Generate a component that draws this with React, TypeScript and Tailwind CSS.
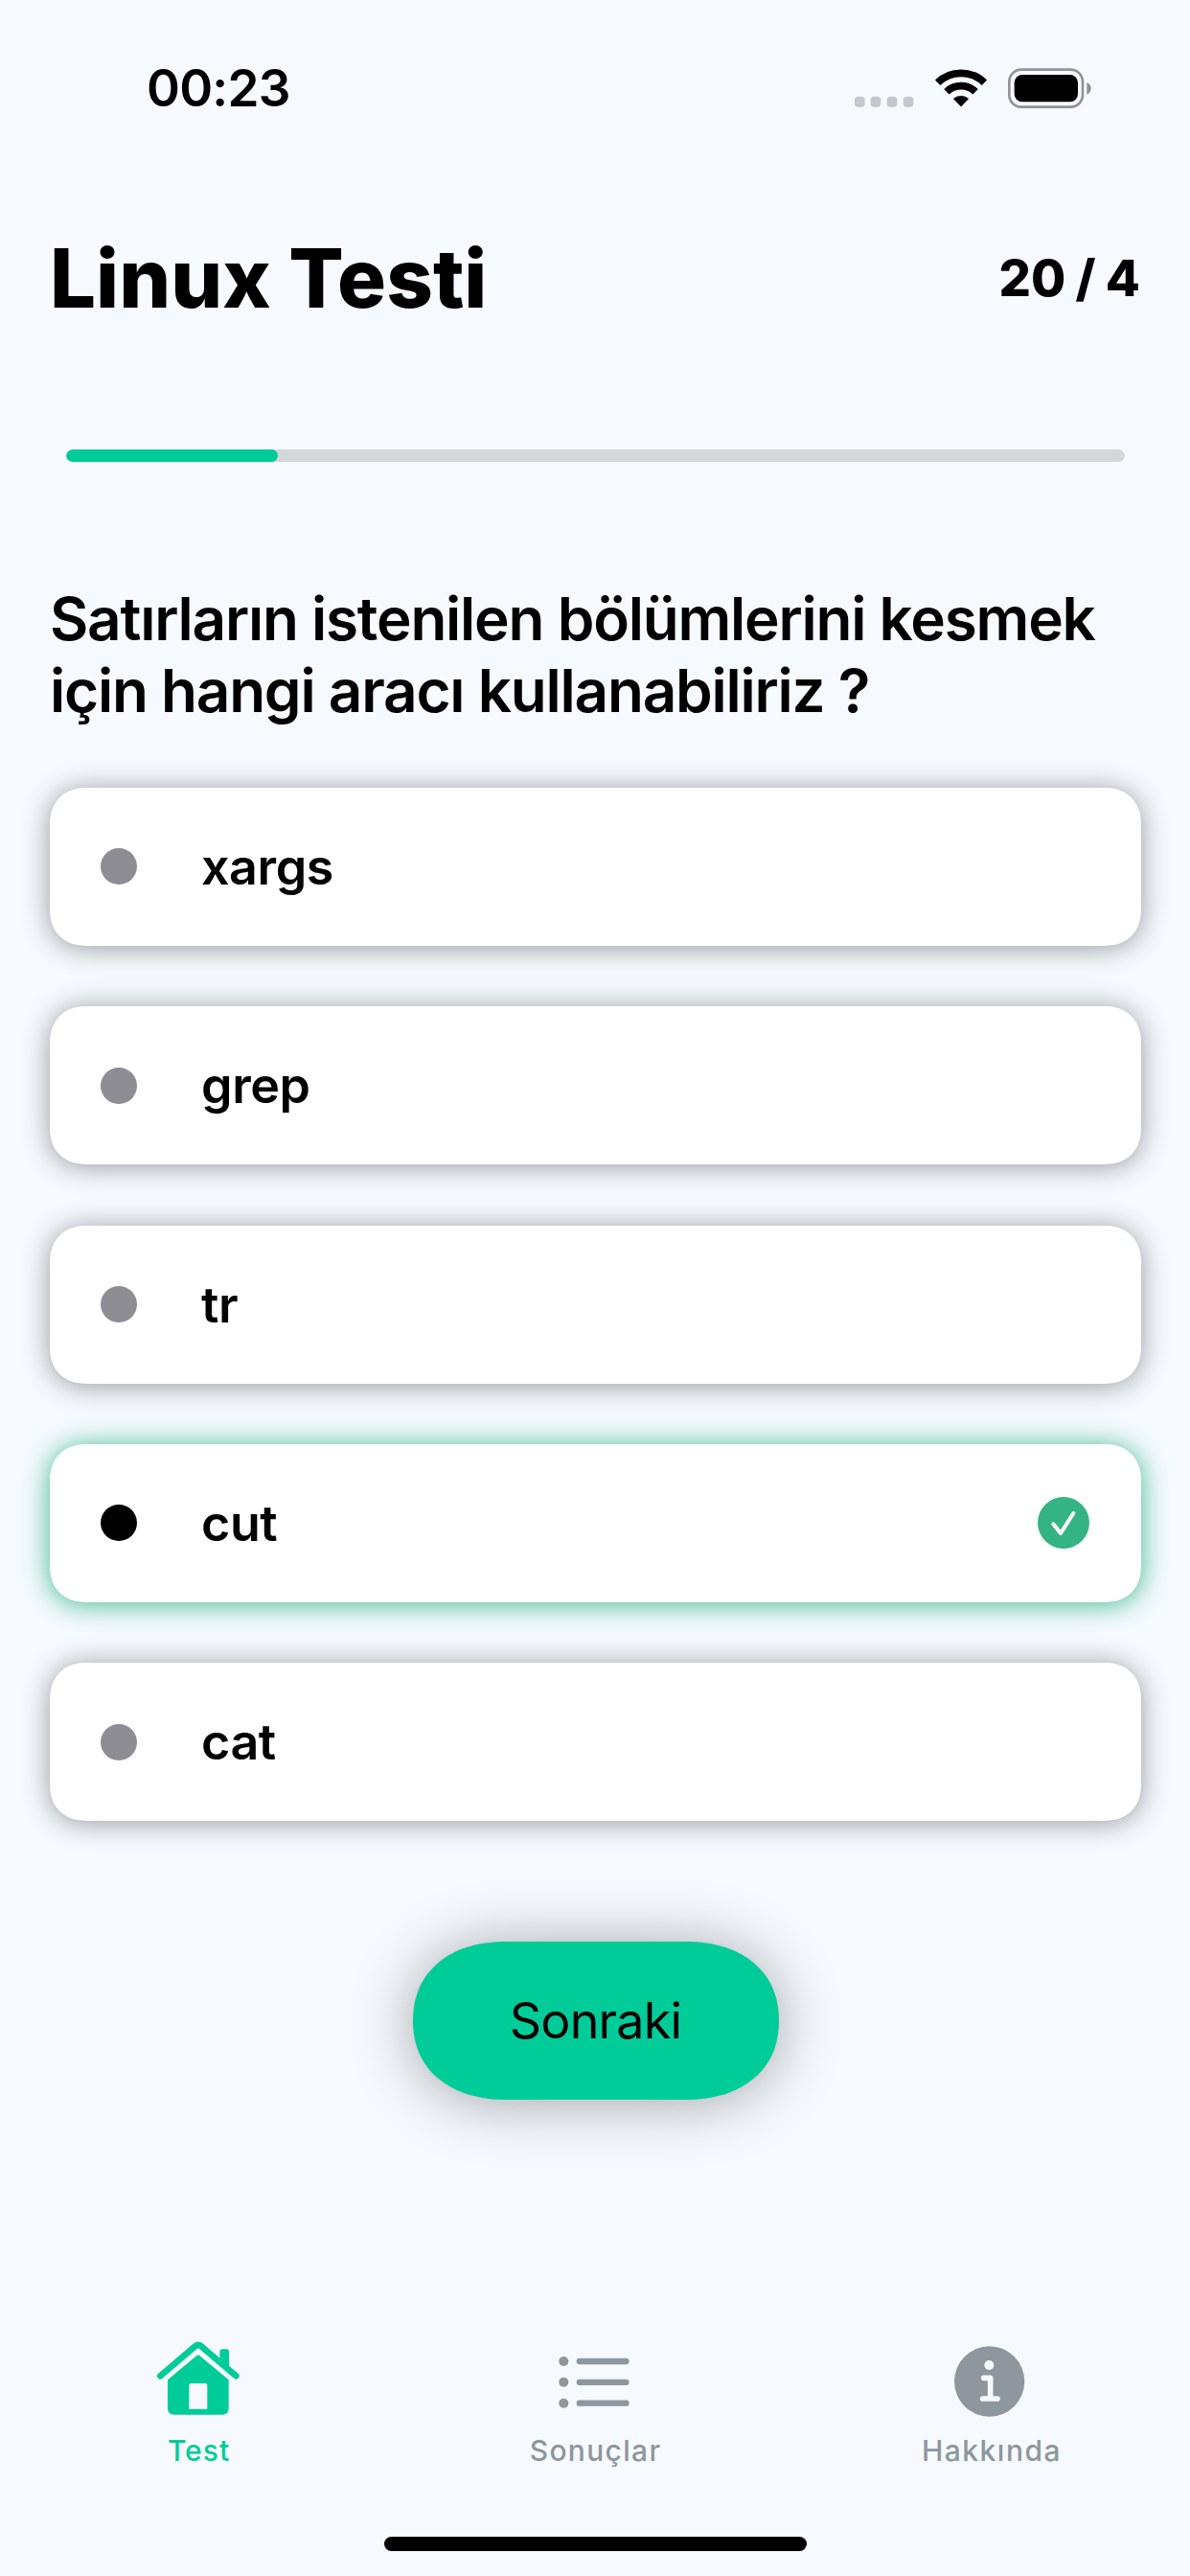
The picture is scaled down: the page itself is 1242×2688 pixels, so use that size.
import React from "react";

type Option = { label: string; selected?: boolean };

const options: Option[] = [
  { label: "xargs" },
  { label: "grep" },
  { label: "tr" },
  { label: "cut", selected: true },
  { label: "cat" },
];

const current = 4;
const total = 20;

function StatusBar() {
  return (
    <div className="flex h-[184px] items-center justify-between pl-[153px] pr-[103px]">
      <span className="pt-px text-[53px] leading-none font-[560] tracking-[-0.8px]">00:23</span>
      <div className="flex items-center gap-[22px]">
        <svg width="62" height="42" viewBox="92 93 186 126" fill="#c4c8cd">
          <rect x="92" y="182" width="32" height="33" rx="11" />
          <rect x="142" y="182" width="32" height="33" rx="11" />
          <rect x="193" y="182" width="32" height="33" rx="11" />
          <rect x="244" y="182" width="32" height="33" rx="11" />
        </svg>
        <svg width="54" height="42" viewBox="344 93 162 126" fill="none" stroke="#000" strokeWidth="23">
          <path d="M352 138.5A105 105 0 0 1 498 138.5" />
          <path d="M379.8 167.3A65 65 0 0 1 470.2 167.3" />
          <path d="M402 189A36 36 0 0 1 448 189L425 213Z" fill="#000" stroke="#000" strokeWidth="2" strokeLinejoin="round" />
        </svg>
        <svg width="87" height="42" viewBox="574 92 261 126" fill="none">
          <rect x="578" y="97" width="230" height="117" rx="38" stroke="#929398" strokeWidth="8" />
          <rect x="594" y="113" width="199" height="85" rx="25" fill="#000" />
          <path d="M821 137C830 141 834 148 834 156C834 164 830 171 821 175Z" fill="#8e8f93" />
        </svg>
      </div>
    </div>
  );
}

function CheckBadge() {
  return (
    <svg className="ml-auto" width="54" height="54" viewBox="246 307 162 162" fill="none">
      <circle cx="327" cy="388" r="81" fill="#34b485" />
      <path d="M295 392L318 421L358 358" stroke="#fff" strokeWidth="12" strokeLinecap="round" strokeLinejoin="round" />
    </svg>
  );
}

function OptionCard({ label, selected }: Option) {
  return (
    <button
      className={
        selected
          ? "flex h-[165px] items-center rounded-[35px] bg-white pl-[53px] pr-[54px] shadow-[0_2px_29px_rgba(52,180,133,0.95)] supports-[corner-shape:squircle]:rounded-[39px] supports-[corner-shape:squircle]:[corner-shape:superellipse(1.2)]"
          : "flex h-[165px] items-center rounded-[35px] bg-white pl-[53px] pr-[54px] shadow-[0_2px_29px_rgba(0,0,0,0.4)] supports-[corner-shape:squircle]:rounded-[39px] supports-[corner-shape:squircle]:[corner-shape:superellipse(1.2)]"
      }
    >
      <span className={selected ? "size-[38px] rounded-full bg-black" : "size-[38px] rounded-full bg-[#8e8d93]"} />
      <span className="ml-[67px] pt-px text-[52px] leading-[64px] font-semibold tracking-[-0.4px]">{label}</span>
      {selected && <CheckBadge />}
    </button>
  );
}

function HomeIcon() {
  return (
    <svg width="90" height="90" viewBox="126 60 270 270" fill="#00cc99">
      <path
        fillRule="evenodd"
        d="M256 114Q260.500 110 265 114L356 190V278Q356 299 335 299H186Q165 299 165 278V190ZM238 201Q232 201 232 207V281H289V207Q289 201 283 201Z"
      />
      <path d="M328 124V102Q328 94 336 94H349Q357 94 357 102V148Z" />
      <path d="M142 178L252 84Q260.500 78 269 84L379 178" fill="none" stroke="#00cc99" strokeWidth="20" strokeLinecap="round" strokeLinejoin="round" />
    </svg>
  );
}

function ListIcon() {
  return (
    <svg width="90" height="90" viewBox="168 60 270 270" fill="#8e969e">
      {[132, 197.5, 263].map((y) => (
        <g key={y}>
          <circle cx="205" cy={y} r="15" />
          <rect x="245" y={y - 9.5} width="165" height="19" rx="9.500" />
        </g>
      ))}
    </svg>
  );
}

function InfoIcon() {
  return (
    <svg width="90" height="90" viewBox="180 60 270 270" fill="none">
      <circle cx="308" cy="195" r="110" fill="#8e969e" />
      <circle cx="307" cy="144" r="15" fill="#f6faff" />
      <path d="M290 184H311V249M287 249H333" stroke="#f6faff" strokeWidth="17" strokeLinecap="round" strokeLinejoin="round" />
    </svg>
  );
}

function TabBar() {
  return (
    <nav className="grid grid-cols-3 text-[30px] leading-9 font-medium text-[#8e969e]">
      <div className="flex flex-col items-center gap-[9px] text-[#00cc99]">
        <HomeIcon />
        <span className="pl-px tracking-[0.99px]">Test</span>
      </div>
      <div className="flex flex-col items-center gap-[9px]">
        <ListIcon />
        <span className="pl-px tracking-[1.31px]">Sonuçlar</span>
      </div>
      <div className="flex flex-col items-center gap-[9px]">
        <InfoIcon />
        <span className="tracking-[1.49px]">Hakkında</span>
      </div>
    </nav>
  );
}

export default function App() {
  return (
    <div className="flex h-[2688px] w-[1242px] flex-col overflow-hidden bg-[#f6faff] font-['Inter',sans-serif] text-black">
      <StatusBar />
      <header className="flex h-[212px] items-center justify-between px-[52px]">
        <h1 className="text-[85px] leading-none font-extrabold">Linux Testi</h1>
        <span className="text-[52.500px] leading-none font-extrabold [word-spacing:-1.2px]">
          {total} / {current}
        </span>
      </header>
      <div className="mr-[68px] ml-[69px] mt-[73px] h-[13px] overflow-hidden rounded-full bg-[#d3d7da]">
        <div className="h-full rounded-full bg-[#00cc99]" style={{ width: `${(current / total) * 100}%` }} />
      </div>
      <h2 className="mt-[125.500px] pl-[52px] text-[62px] leading-[75.700px] font-semibold tracking-[-1.22px] whitespace-nowrap">
        Satırların istenilen bölümlerini kesmek
        <br />
        için hangi aracı kullanabiliriz ?
      </h2>
      <div className="mr-[51.500px] ml-[52px] mt-[63px] flex flex-col gap-[63.300px]">
        {options.map((o) => (
          <OptionCard key={o.label} {...o} />
        ))}
      </div>
      <button className="mt-[126px] ml-px flex h-[165px] w-[382px] items-center justify-center self-center rounded-[92px/82px] bg-[#00cc99] pt-px text-[52px] tracking-[-0.83px] shadow-[0_3px_62px_rgba(0,0,0,0.35)] supports-[corner-shape:squircle]:rounded-[98px/82.5px] supports-[corner-shape:squircle]:[corner-shape:superellipse(1.15)]">
        Sonraki
      </button>
      <div className="mt-auto h-[248px]">
        <TabBar />
        <div className="mx-auto mt-[72px] h-[15px] w-[441px] rounded-full bg-black" />
      </div>
    </div>
  );
}
